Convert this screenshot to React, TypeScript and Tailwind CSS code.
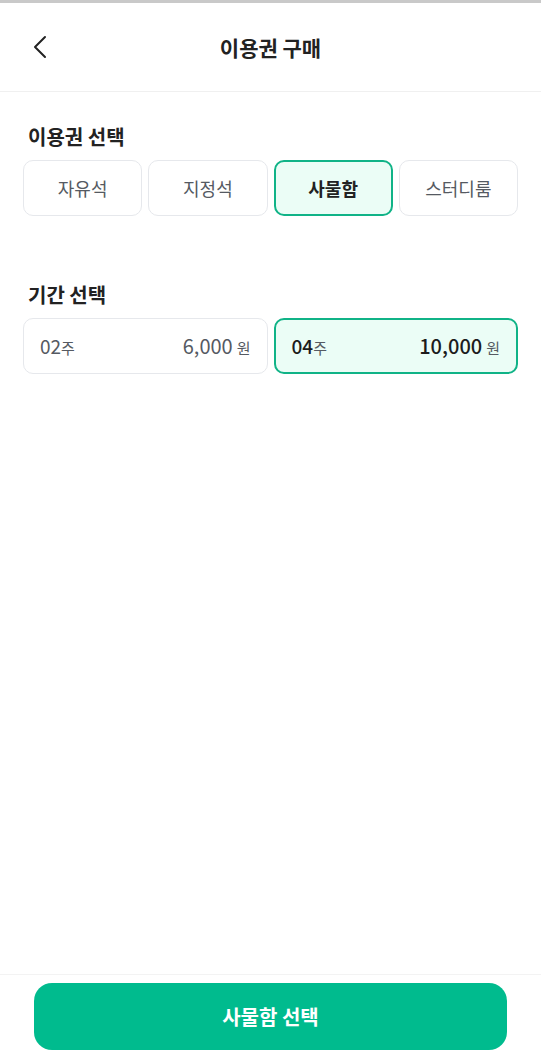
import { useState } from "react";

const ticketTypes = ["자유석", "지정석", "사물함", "스터디룸"];

const periods = [
  { weeks: "02", price: "6,000" },
  { weeks: "04", price: "10,000" },
];

const App = () => {
  const [ticket, setTicket] = useState(2);
  const [period, setPeriod] = useState(1);

  return (
    <div
      className="flex h-[1060px] w-full flex-col overflow-hidden border-t-[3px] border-[#c9c9c9] bg-white"
      style={{ fontFamily: '"Noto Sans CJK KR", "Noto Sans", sans-serif' }}
    >
      {/* header */}
      <header className="relative flex h-[89px] shrink-0 items-center justify-center border-b border-[#f0f0f0]">
        <button className="absolute left-[28px] top-[30px] flex h-[28px] w-[24px] items-center justify-center text-[#222]">
          <svg width="16" height="24" viewBox="0 0 16 24" fill="none">
            <path d="M13 2 L3 12 L13 22" stroke="currentColor" strokeWidth="2" strokeLinecap="round" strokeLinejoin="round" />
          </svg>
        </button>
        <h1 className="text-[21px] font-bold text-[#222] leading-none">이용권 구매</h1>
      </header>

      {/* content */}
      <main className="flex flex-1 flex-col px-[23px]">
        {/* ticket type */}
        <section className="flex flex-col pt-[31px]">
          <h2 className="pl-[5px] text-[20px] font-bold leading-[28px] text-[#222]">이용권 선택</h2>
          <div className="mt-[9px] grid grid-cols-4 gap-[6px]">
            {ticketTypes.map((label, index) => {
              const active = index === ticket;
              return (
                <button
                  key={label}
                  onClick={() => setTicket(index)}
                  className={`flex h-[56px] items-center justify-center rounded-[10px] text-[18px] leading-none ${
                    active
                      ? "border-[2.5px] border-[#10b387] bg-[#ebfdf6] font-bold text-[#222]"
                      : "border-[1.5px] border-[#e6e8ec] bg-white text-[#555a62]"
                  }`}
                >
                  {label}
                </button>
              );
            })}
          </div>
        </section>

        {/* period */}
        <section className="flex flex-col pt-[65px]">
          <h2 className="pl-[5px] text-[20px] font-bold leading-[28px] text-[#222]">기간 선택</h2>
          <div className="mt-[9px] grid grid-cols-2 gap-[6px]">
            {periods.map((item, index) => {
              const active = index === period;
              return (
                <button
                  key={item.weeks}
                  onClick={() => setPeriod(index)}
                  className={`flex h-[56px] items-center justify-between rounded-[10px] pl-[16px] pr-[16px] ${
                    active
                      ? "border-[2.5px] border-[#10b387] bg-[#ebfdf6] text-[#1c1c1c]"
                      : "border-[1.5px] border-[#e6e8ec] bg-white text-[#555a62]"
                  }`}
                >
                  <span className="flex items-baseline">
                    <span className={`text-[19px] ${active ? "font-medium" : ""}`}>{item.weeks}</span>
                    <span className="text-[15px] text-[#555a62]">주</span>
                  </span>
                  <span className="flex items-baseline gap-[4px]">
                    <span className={`text-[20px] ${active ? "font-medium" : ""}`}>{item.price}</span>
                    <span className="text-[15px] text-[#555a62]">원</span>
                  </span>
                </button>
              );
            })}
          </div>
        </section>
      </main>

      {/* bottom action */}
      <footer className="flex h-[86px] shrink-0 items-start justify-center border-t border-[#f3f3f3] px-[34px] pt-[8px]">
        <button className="flex h-[67px] w-full items-center justify-center rounded-[18px] bg-[#00bb8e] text-[20px] font-bold text-white">
          사물함 선택
        </button>
      </footer>
    </div>
  );
};

export default App;
